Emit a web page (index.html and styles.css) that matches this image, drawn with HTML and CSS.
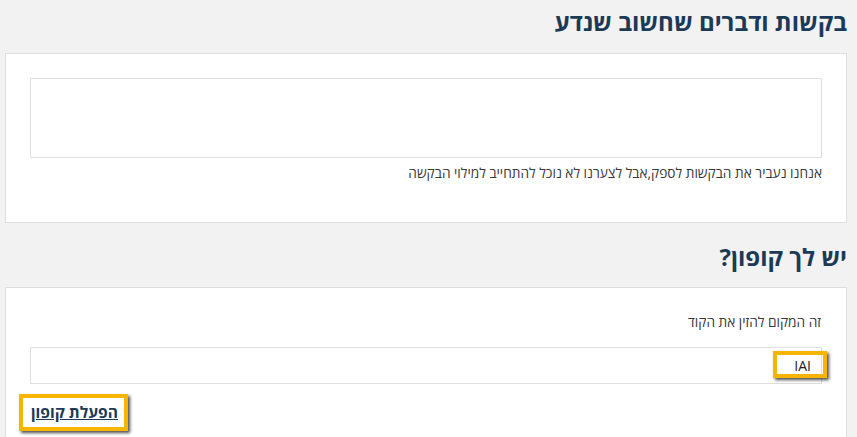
FILE: index.html
```html
<!DOCTYPE html>
<html lang="he" dir="rtl">
<head>
<meta charset="utf-8">
<title>הזמנה</title>
<link rel="stylesheet" href="styles.css">
</head>
<body>
<main class="page">
  <h2 class="section-title first">בקשות ודברים שחשוב שנדע</h2>
  <section class="panel requests">
    <textarea class="notes" aria-label="בקשות"></textarea>
    <p class="hint">אנחנו נעביר את הבקשות לספק,אבל לצערנו לא נוכל להתחייב למילוי הבקשה</p>
  </section>
  <h2 class="section-title second">יש לך קופון?</h2>
  <section class="panel coupon">
    <label class="field-label" for="code">זה המקום להזין את הקוד</label>
    <div class="input-wrap">
      <input id="code" class="code" type="text" value="IAI">
      <span class="mark mark-code"></span>
    </div>
    <div class="actions">
      <a class="apply" href="#">הפעלת קופון</a>
    </div>
  </section>
</main>
</body>
</html>
```
FILE: styles.css
```css
html, body {
  margin: 0;
  padding: 0;
  background: #f2f2f2;
  height: 100%;
  overflow: hidden;
}
body {
  font-family: "Open Sans", "DejaVu Sans", sans-serif;
  color: #333;
}
.page {
  padding: 0 10px 0 5px;
}
.section-title {
  margin: 0;
  font-size: 24px;
  font-weight: 700;
  color: #1c3a56;
  line-height: 32px;
}
.section-title.first {
  padding-top: 6px;
  padding-bottom: 15px;
}
.section-title.second {
  padding-top: 18px;
  padding-bottom: 14px;
}
.panel {
  background: #fff;
  border: 1px solid #dedede;
  padding: 24px 24px 0 24px;
}
.requests {
  padding-bottom: 39px;
}
.notes {
  display: block;
  box-sizing: border-box;
  width: 100%;
  height: 80px;
  margin: 0;
  border: 1px solid #dedede;
  resize: none;
  background: #fff;
}
.hint {
  margin: 5px 0 0;
  font-size: 13.7px;
  line-height: 20px;
  color: #3a3a3a;
}
.coupon {
  padding-top: 24px;
  padding-bottom: 20px;
}
.field-label {
  display: block;
  font-size: 13.7px;
  line-height: 20px;
  color: #3a3a3a;
  margin: 0 1px 15px 0;
}
.input-wrap {
  position: relative;
}
.code {
  display: block;
  box-sizing: border-box;
  width: 100%;
  height: 37px;
  margin: 0;
  border: 1px solid #dedede;
  padding: 0 10px;
  font-family: "Open Sans", "Liberation Sans", sans-serif;
  font-size: 14px;
  color: #222;
  background: #fff;
  outline: none;
}
.mark {
  position: absolute;
  border: 4px solid #f7b500;
  box-shadow: 2px 2px 3px rgba(0, 0, 0, 0.7);
  box-sizing: border-box;
}
.mark-code {
  top: 4px;
  right: -5px;
  width: 54px;
  height: 27px;
}
.actions {
  display: flex;
  justify-content: flex-end;
  margin-top: 10px;
  margin-left: -11px;
}
.apply {
  display: inline-block;
  box-sizing: border-box;
  width: 109px;
  height: 37px;
  padding: 4px 6px 0 2px;
  border: 4px solid #f7b500;
  box-shadow: 2px 2px 3px rgba(0, 0, 0, 0.7);
  font-size: 15.6px;
  font-weight: 700;
  color: #1c3a56;
  text-decoration: underline;
  line-height: 20px;
  white-space: nowrap;
}
```
